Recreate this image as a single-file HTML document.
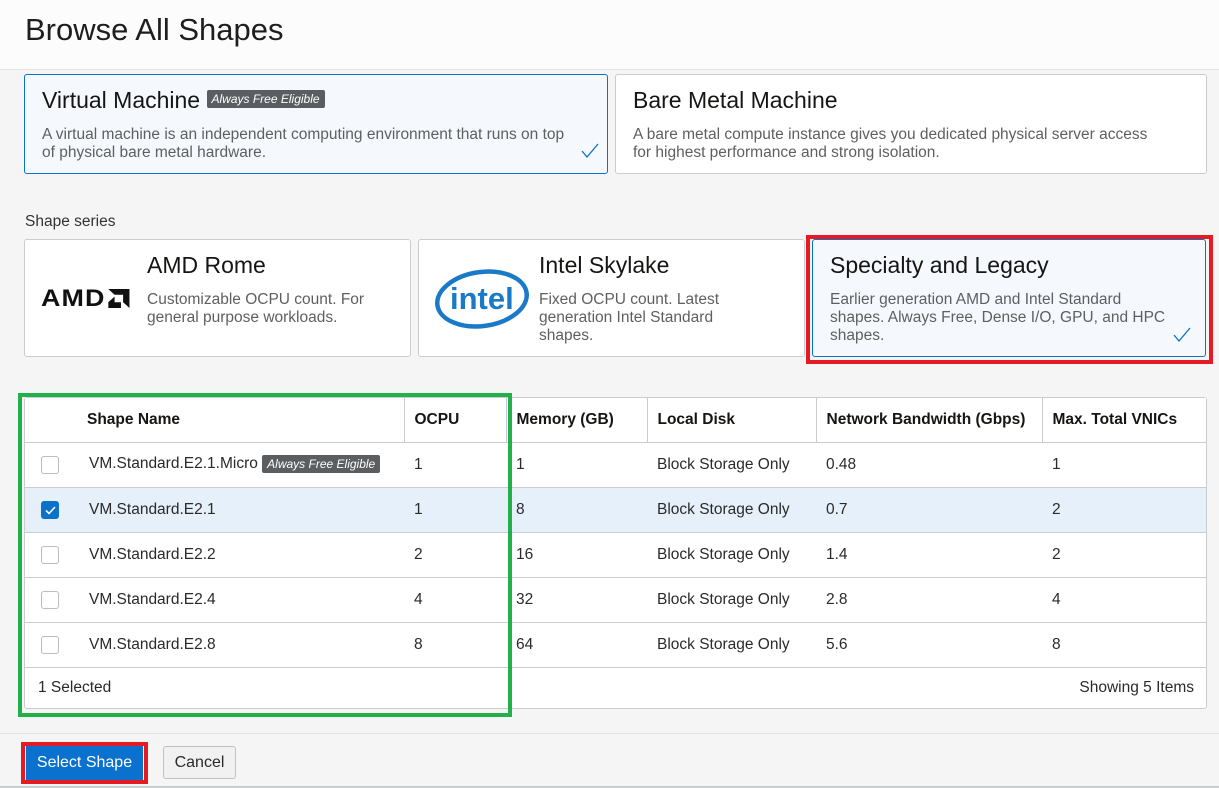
<!DOCTYPE html>
<html><head><meta charset="utf-8"><style>
*{box-sizing:border-box;margin:0;padding:0}
body{width:1219px;height:788px;background:#f5f5f5;font-family:"Liberation Sans",Arial,sans-serif;color:#161513;position:relative;overflow:hidden}
.abs{position:absolute}
.hdr{left:0;top:0;width:1219px;height:70px;background:#fcfcfc;border-bottom:1px solid #e2e2e2}
.hdr h1{position:absolute;left:25px;top:12px;font-size:31px;font-weight:normal;color:#1e1e1e}
.card{background:#fff;border:1px solid #c9ccd0;border-radius:3px}
.card.sel{background:#f5f8fd;border-color:#0a72c8}
.t{font-size:23px;color:#161513}
.d{font-size:15.5px;color:#5f5f5f;line-height:18px}
.badge{display:inline-block;background:#5b5e61;color:#fff;font-style:italic;font-size:12px;padding:2px 5px;border-radius:2px;vertical-align:middle}
.chk{position:absolute}
table{border-collapse:collapse;background:#fff;font-size:15.5px}
td,th{height:45px;border-bottom:1px solid #c9ccd0;text-align:left;padding-left:10px;font-weight:normal;color:#2a2a2a}
th{font-weight:bold;height:44px;border-right:1px solid #c9ccd0;color:#161513}
th:last-child{border-right:none}
.cb{width:18px;height:18px;border:1px solid #b9bcc0;border-radius:3px;background:#fff;margin-left:6px;position:relative}
.cb.on{background:#0a72c8;border-color:#0a72c8}
tr.on td{background:#e6f0fa}
</style></head><body>
<div class="abs hdr"><h1>Browse All Shapes</h1></div>

<div class="abs card sel" style="left:24px;top:74px;width:584px;height:100px">
 <div class="abs t" style="left:17px;top:12px">Virtual Machine <span class="badge" style="position:relative;top:-3px">Always Free Eligible</span></div>
 <div class="abs d" style="left:17px;top:51px;width:535px">A virtual machine is an independent computing environment that runs on top of physical bare metal hardware.</div>
 <svg class="chk" style="left:556px;top:68px" width="18" height="16" viewBox="0 0 18 16"><path d="M1 8L6 14L17 1" fill="none" stroke="#0a72c8" stroke-width="1.3"/></svg>
</div>
<div class="abs card" style="left:615px;top:74px;width:592px;height:100px">
 <div class="abs t" style="left:17px;top:12px">Bare Metal Machine</div>
 <div class="abs d" style="left:17px;top:51px;width:530px">A bare metal compute instance gives you dedicated physical server access for highest performance and strong isolation.</div>
</div>

<div class="abs" style="left:25px;top:213px;font-size:15.5px;color:#333">Shape series</div>

<div class="abs card" style="left:24px;top:239px;width:387px;height:118px">
 <div class="abs" style="left:16px;top:45px;font:900 24px 'Liberation Sans',sans-serif;letter-spacing:1px;color:#111;transform:scaleX(1.12);transform-origin:left">AMD<svg style="margin-left:2px;vertical-align:-2px" width="19" height="19" viewBox="0 0 20 20"><path d="M0 0H20V20L14 14V6H6Z M6 8L0 14V20H12V14H6Z" fill="#111"/></svg></div>
 <div class="abs t" style="left:122px;top:12px">AMD Rome</div>
 <div class="abs d" style="left:122px;top:51px;width:240px">Customizable OCPU count. For general purpose workloads.</div>
</div>
<div class="abs card" style="left:418px;top:239px;width:387px;height:118px">
 <svg class="abs" style="left:14px;top:24px" width="98" height="68" viewBox="0 0 98 68"><ellipse cx="49" cy="35" rx="45" ry="27" fill="none" stroke="#1a7ac7" stroke-width="4.5" transform="rotate(-8 49 35)"/><text x="17" y="45" font-family="Liberation Sans,sans-serif" font-size="31" font-weight="bold" fill="#1a7ac7">intel</text></svg>
 <div class="abs t" style="left:120px;top:12px">Intel Skylake</div>
 <div class="abs d" style="left:120px;top:51px;width:200px">Fixed OCPU count. Latest generation Intel Standard shapes.</div>
</div>
<div class="abs" style="left:806px;top:235px;width:407px;height:129px;border:4px solid #e51b24"></div>
<div class="abs card sel" style="left:812px;top:239px;width:394px;height:118px">
 <div class="abs t" style="left:17px;top:12px">Specialty and Legacy</div>
 <div class="abs d" style="left:17px;top:51px;width:345px">Earlier generation AMD and Intel Standard shapes. Always Free, Dense I/O, GPU, and HPC shapes.</div>
 <svg class="chk" style="left:360px;top:87px" width="18" height="16" viewBox="0 0 18 16"><path d="M1 8L6 14L17 1" fill="none" stroke="#0a72c8" stroke-width="1.3"/></svg>
</div>

<div class="abs" style="left:24px;top:397px;width:1183px;height:312px;background:#fff;border:1px solid #c9ccd0;border-radius:3px">
<table style="width:1181px">
<tr><th style="width:52px;border-right:none"></th><th style="width:327px">Shape Name</th><th style="width:102px">OCPU</th><th style="width:141px">Memory (GB)</th><th style="width:169px">Local Disk</th><th style="width:226px">Network Bandwidth (Gbps)</th><th>Max. Total VNICs</th></tr>
<tr><td><div class="cb"></div></td><td style="padding-left:12px">VM.Standard.E2.1.Micro <span class="badge">Always Free Eligible</span></td><td>1</td><td>1</td><td>Block Storage Only</td><td>0.48</td><td>1</td></tr>
<tr class="on"><td><div class="cb on"><svg style="position:absolute;left:3px;top:4px" width="11" height="9" viewBox="0 0 11 9"><path d="M1 4.5L4 7.5L10 1" fill="none" stroke="#fff" stroke-width="1.6"/></svg></div></td><td style="padding-left:12px">VM.Standard.E2.1</td><td>1</td><td>8</td><td>Block Storage Only</td><td>0.7</td><td>2</td></tr>
<tr><td><div class="cb"></div></td><td style="padding-left:12px">VM.Standard.E2.2</td><td>2</td><td>16</td><td>Block Storage Only</td><td>1.4</td><td>2</td></tr>
<tr><td><div class="cb"></div></td><td style="padding-left:12px">VM.Standard.E2.4</td><td>4</td><td>32</td><td>Block Storage Only</td><td>2.8</td><td>4</td></tr>
<tr><td><div class="cb"></div></td><td style="padding-left:12px">VM.Standard.E2.8</td><td>8</td><td>64</td><td>Block Storage Only</td><td>5.6</td><td>8</td></tr>
</table>
<div class="abs" style="left:13px;top:281px;font-size:15.5px;color:#2a2a2a">1 Selected</div>
<div class="abs" style="right:12px;top:281px;font-size:15.5px;color:#2a2a2a">Showing 5 Items</div>
</div>
<div class="abs" style="left:18px;top:393px;width:494px;height:324px;border:4px solid #22b04b"></div>

<div class="abs" style="left:0;top:733px;width:1219px;height:55px;background:#f5f5f5;border-top:1px solid #e2e2e2"></div>
<div class="abs" style="left:21px;top:742px;width:127px;height:42px;border:4px solid #e51b24"></div>
<div class="abs" style="left:26px;top:746px;width:117px;height:34px;background:#0a72ce;color:#fff;font-size:16px;text-align:center;line-height:34px">Select Shape</div>
<div class="abs" style="left:163px;top:746px;width:73px;height:33px;background:#f1f1f1;border:1px solid #bfc1c3;border-radius:3px;font-size:16px;text-align:center;line-height:31px;color:#2a2a2a">Cancel</div>
<div class="abs" style="left:0;top:786px;width:1219px;height:2px;background:#c9ccd0"></div>
</body></html>
